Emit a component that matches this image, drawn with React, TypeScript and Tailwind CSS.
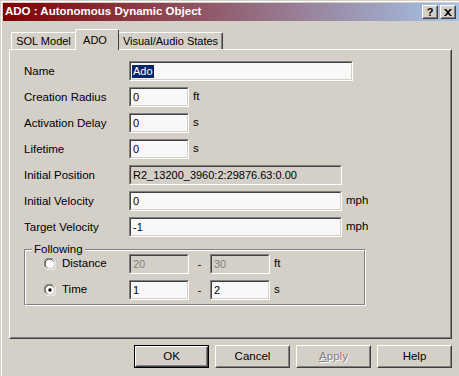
import React from "react";

const font = "font-['Liberation_Sans',Arial,sans-serif]";

function Box({ w, text, disabled, readOnly, selected }: { w: string; text: string; disabled?: boolean; readOnly?: boolean; selected?: boolean }) {
  const bg = disabled || readOnly ? "bg-[#d4d0c8]" : "bg-[#f8f8f8]";
  const color = disabled ? "text-[#808080]" : "text-black";
  return (
    <div className={`${w} h-[20px] border border-t-[#808080] border-l-[#808080] border-b-white border-r-white`}>
      <div className={`h-full border border-t-[#404040] border-l-[#404040] border-b-[#d4d0c8] border-r-[#d4d0c8] ${bg} ${color} flex items-center pl-[1px] text-[11px] leading-none whitespace-nowrap overflow-hidden`}>
        {selected ? <span className="bg-[#0a246a] text-white h-[13px] flex items-center px-[1px]">{text}</span> : <span className="px-[1px]">{text}</span>}
      </div>
    </div>
  );
}

function Row({ label, children }: { label: string; children: React.ReactNode }) {
  return (
    <div className="flex items-center h-[20px]">
      <div className="w-[105px] text-[11.5px] pt-px">{label}</div>
      {children}
    </div>
  );
}

function Unit({ t }: { t: string }) {
  return <span className="ml-[4px] text-[11.5px]">{t}</span>;
}

function Radio({ on }: { on?: boolean }) {
  return (
    <svg width="12" height="12" viewBox="0 0 12 12" className="shrink-0">
      <path d="M10.5 3.5A5.5 5.5 0 1 0 3.5 10.5" fill="none" stroke="#808080" strokeWidth="1" />
      <path d="M9.5 3.5A4.5 4.5 0 1 0 3.5 9.5" fill="none" stroke="#404040" strokeWidth="1" />
      <path d="M1.5 8.5A5.5 5.5 0 1 0 8.5 1.5" fill="none" stroke="#ffffff" strokeWidth="1" />
      <circle cx="6" cy="6" r="4" fill="#ffffff" />
      {on && <circle cx="6" cy="6" r="1.7" fill="#000000" />}
    </svg>
  );
}

function Btn({ label, def, disabled }: { label: React.ReactNode; def?: boolean; disabled?: boolean }) {
  return (
    <div className={`w-[75px] h-[23px] ${def ? "border border-black" : ""}`}>
      <div className="h-full border border-t-white border-l-white border-b-[#404040] border-r-[#404040]">
        <div className="h-full border border-t-[#d4d0c8] border-l-[#d4d0c8] border-b-[#808080] border-r-[#808080] flex items-center justify-center text-[11.5px]">
          {disabled ? <span className="text-[#808080] [text-shadow:1px_1px_0_#ffffff]">{label}</span> : label}
        </div>
      </div>
    </div>
  );
}

function TitleBtn({ children }: { children: React.ReactNode }) {
  return (
    <div className="w-[16px] h-[14px] bg-[#d4d0c8] border border-t-white border-l-white border-b-[#404040] border-r-[#404040]">
      <div className="h-full border border-t-[#d4d0c8] border-l-[#d4d0c8] border-b-[#808080] border-r-[#808080] flex items-center justify-center">
        {children}
      </div>
    </div>
  );
}

export default function App() {
  return (
    <div className={`w-[459px] h-[376px] bg-[#d4d0c8] overflow-hidden pl-px pt-px text-black ${font}`}>
      <div className="h-full border-l border-t border-white pl-px pt-px">
        {/* title bar */}
        <div className="h-[18px] w-[456px] bg-[linear-gradient(to_right,#800000,#a6caf0_103%)] flex items-center pl-[2px] pr-[3px]">
          <span className="text-white font-bold text-[11.5px] flex-1">ADO : Autonomous Dynamic Object</span>
          <div className="flex gap-[2px]">
            <TitleBtn>
              <span className="text-[11px] font-bold leading-none">?</span>
            </TitleBtn>
            <TitleBtn>
              <svg width="8" height="7" viewBox="0 0 8 7">
                <path d="M0 0h2l2 2 2-2h2L5 3.5 8 7H6L4 5 2 7H0l3-3.5z" fill="#000" />
              </svg>
            </TitleBtn>
          </div>
        </div>

        <div className="ml-[6px] mt-[8px]">
          {/* tabs */}
          <div className="flex items-end h-[20px] pl-[2px]">
            <div className="w-[64px] h-[17px] border-l border-t border-white rounded-tl-[2px] flex items-center justify-center pt-px text-[11px]">
              SOL Model
            </div>
            <div className="relative z-10 -mb-px w-[44px] h-[21px] bg-[#d4d0c8] border-l border-t border-white border-r border-r-[#404040] rounded-t-[2px] flex items-start pt-[2px] justify-center pr-[4px] text-[11px]">
              ADO
            </div>
            <div className="w-[104px] h-[17px] border-t border-white border-r border-r-[#404040] rounded-tr-[2px] flex items-center justify-center pt-px text-[11px] shadow-[inset_-1px_0_0_#808080]">
              Visual/Audio States
            </div>
          </div>

          {/* panel */}
          <div className="w-[443px] h-[290px] border border-t-white border-l-white border-b-[#404040] border-r-[#404040]">
            <div className="h-full border border-t-[#d4d0c8] border-l-[#d4d0c8] border-b-[#808080] border-r-[#808080] pl-[13px] pt-[10px] flex flex-col gap-[6px]">
              <Row label="Name">
                <Box w="w-[224px]" text="Ado" selected />
              </Row>
              <Row label="Creation Radius">
                <Box w="w-[60px]" text="0" />
                <Unit t="ft" />
              </Row>
              <Row label="Activation Delay">
                <Box w="w-[60px]" text="0" />
                <Unit t="s" />
              </Row>
              <Row label="Lifetime">
                <Box w="w-[60px]" text="0" />
                <Unit t="s" />
              </Row>
              <Row label="Initial Position">
                <Box w="w-[213px]" text="R2_13200_3960:2:29876.63:0.00" readOnly />
              </Row>
              <Row label="Initial Velocity">
                <Box w="w-[213px]" text="0" />
                <Unit t="mph" />
              </Row>
              <Row label="Target Velocity">
                <Box w="w-[213px]" text="-1" />
                <Unit t="mph" />
              </Row>

              {/* group box */}
              <div className="relative mt-[6px] w-[342px] border border-t-[#808080] border-l-[#808080] border-b-white border-r-white">
                <span className="absolute -top-[7px] left-[7px] bg-[#d4d0c8] px-[2px] text-[11.5px] leading-[13px]">Following</span>
                <div className="border border-t-white border-l-white border-b-[#808080] border-r-[#808080] pt-[3px] pb-[4px] flex flex-col gap-[6px]">
                  <div className="flex items-center h-[20px]">
                    <div className="w-[103px] pl-[18px] flex items-center gap-[6px] text-[11.5px]">
                      <Radio />
                      <span>Distance</span>
                    </div>
                    <Box w="w-[60px]" text="20" disabled />
                    <span className="w-[21px] text-center text-[11px]">-</span>
                    <Box w="w-[60px]" text="30" disabled />
                    <Unit t="ft" />
                  </div>
                  <div className="flex items-center h-[20px]">
                    <div className="w-[103px] pl-[18px] flex items-center gap-[6px] text-[11.5px]">
                      <Radio on />
                      <span>Time</span>
                    </div>
                    <Box w="w-[60px]" text="1" />
                    <span className="w-[21px] text-center text-[11px]">-</span>
                    <Box w="w-[60px]" text="2" />
                    <Unit t="s" />
                  </div>
                </div>
              </div>
            </div>
          </div>

          {/* buttons */}
          <div className="mt-[6px] w-[443px] flex justify-end gap-[6px]">
            <Btn label="OK" def />
            <Btn label="Cancel" />
            <Btn label={<><span className="underline">A</span>pply</>} disabled />
            <Btn label="Help" />
          </div>
        </div>
      </div>
    </div>
  );
}
